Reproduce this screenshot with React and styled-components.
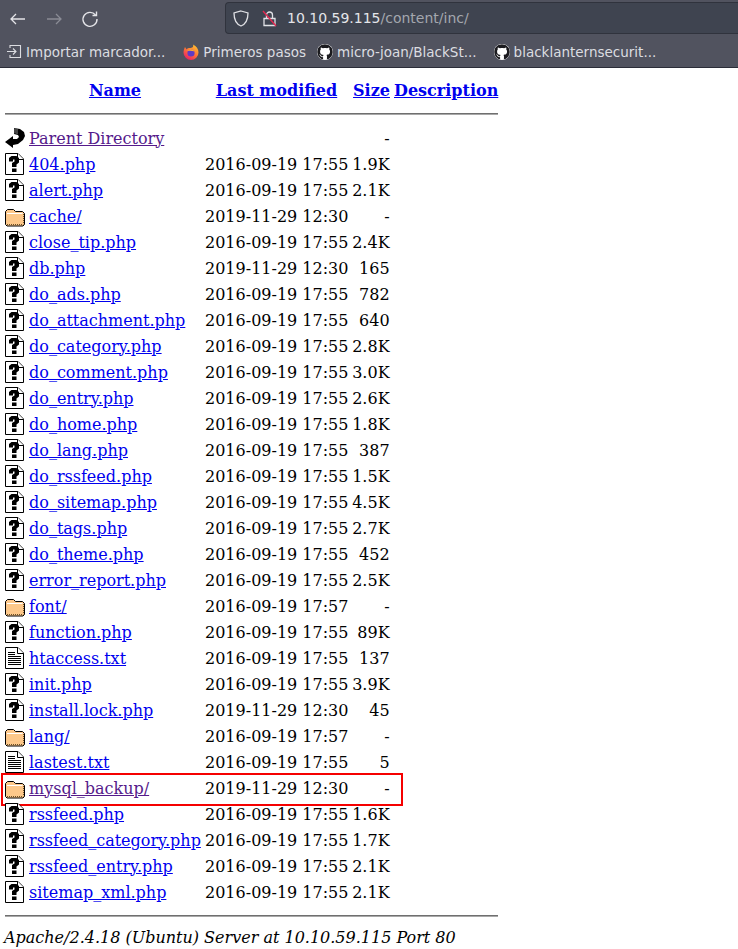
import React from "react"
import styled, { createGlobalStyle } from "styled-components"
import { FaGithub } from "react-icons/fa"

const Global = createGlobalStyle`
    html, body {
        margin: 0;
        padding: 0;
        background: #fff;
    }
    body {
        width: 738px;
        height: 949px;
        overflow: hidden;
        font-family: "DejaVu Serif", serif;
        font-size: 16px;
        color: #000;
    }
`

const Chrome = styled.header`
    height: 68px;
    box-sizing: border-box;
    background: #51535f;
    border-bottom: 1px solid #2b2d38;
    font-family: "DejaVu Sans", sans-serif;
`

const Toolbar = styled.div`
    height: 37px;
    display: flex;
    align-items: center;
`

const NavButton = styled.span`
    width: 18px;
    height: 18px;
    margin-left: ${(p) => p.$gap}px;
    display: flex;
    color: ${(p) => (p.$off ? "#8a8c95" : "#e4e4e8")};
`

const UrlBar = styled.div`
    flex: 1;
    height: 32px;
    margin: 0 0 1px 126px;
    box-sizing: border-box;
    display: flex;
    align-items: center;
    background: #3f4450;
    border: 1px solid #30333d;
    border-right: 0;
    border-radius: 4px 0 0 4px;
    padding-left: 7px;
`

const UrlIcon = styled.span`
    width: 16px;
    height: 17px;
    display: flex;
    margin-right: ${(p) => p.$gap}px;
`

const UrlHost = styled.span`
    font-size: 14px;
    color: #e4e5e9;
`

const UrlPath = styled.span`
    font-size: 14px;
    color: #a4a7ae;
`

const Bookmarks = styled.div`
    height: 30px;
    display: flex;
    align-items: center;
    padding-bottom: 1px;
    box-sizing: border-box;
    font-size: 13.5px;
    color: #dcdde1;
`

const Bookmark = styled.span`
    display: flex;
    align-items: center;
    gap: 4px;
    margin-left: ${(p) => p.$gap}px;
    white-space: nowrap;
`

const GitIcon = styled(FaGithub)`
    width: 16px;
    height: 16px;
    color: #1b1b1f;
    background: #fff;
    border-radius: 50%;
`

const Listing = styled.main`
    padding: 9px 0 0 5px;
`

const HeadRow = styled.div`
    display: grid;
    grid-template-columns: 200px 147px 42px 104px;
    width: 493px;
    height: 26px;
    align-items: center;
    font-weight: bold;
    font-size: 16px;
`

const HeadCell = styled.span`
    text-align: center;
    white-space: nowrap;
    padding-left: ${(p) => p.$left || 0}px;
    padding-right: ${(p) => p.$right || 0}px;
`

const HeadLink = styled.a`
    color: #0000ee;
    text-decoration: underline;
`

const Rule = styled.hr`
    width: 493px;
    height: 2px;
    box-sizing: border-box;
    margin: ${(p) => p.$top}px 0 ${(p) => p.$bottom}px;
    border: 0;
    border-top: 1px solid #6f6f6f;
    border-bottom: 1px solid #a8a8a8;
`

const Row = styled.div`
    position: relative;
    display: grid;
    grid-template-columns: 24px 176px 147px 37.6px;
    width: 493px;
    height: 26px;
    align-items: center;
    white-space: nowrap;
`

const IconCell = styled.span`
    display: flex;
    width: 20px;
    height: 22px;
`

const FileLink = styled.a`
    color: ${(p) => (p.$visited ? "#551a8b" : "#0000ee")};
    text-decoration: underline;
`

const Modified = styled.span``

const Size = styled.span`
    text-align: right;
`

const Highlight = styled.div`
    position: absolute;
    left: -4px;
    top: -2px;
    width: 402px;
    height: 33px;
    box-sizing: border-box;
    border: 2px solid #f50000;
`

const Footer = styled.address`
    font-style: italic;
    font-size: 16px;
    line-height: 19px;
    padding-top: 1px;
    margin-left: -1px;
`

const UnknownIcon = () => (
    <svg width="20" height="22" viewBox="0 0 20 22">
        <path d="M.5.5H13L18.5 6V21.5H.5Z" fill="#fff" stroke="#000" />
        <path d="M12.5.5V6.5H18.5" fill="#fff" stroke="#000" />
        <path d="M4 8.5V5L6.5 3H11.5L14 5V9.5L11.5 11.5V14H7V10L9.5 8.5V6.5H8V8.5Z" fill="#000" />
        <rect x="7" y="15.5" width="4.5" height="3.5" fill="#000" />
    </svg>
)

const TextIcon = () => (
    <svg width="20" height="22" viewBox="0 0 20 22">
        <path d="M.5.5H13L18.5 6V21.5H.5Z" fill="#fff" stroke="#000" />
        <path d="M12.5.5V6.5H18.5" fill="#fff" stroke="#000" />
        <path d="M3 5.5H10M3 7.5H10M3 9.5H16M3 11.5H16M3 13.5H16M3 15.5H16M3 17.5H16" stroke="#000" />
    </svg>
)

const FolderIcon = () => (
    <svg width="20" height="22" viewBox="0 0 20 22">
        <path d="M.5 6.5L2.5 4.5H8.5L10.5 6.5H17.5L19.5 8.5V19.5L18 21H2L.5 19.5Z" fill="#fdc88a" stroke="#000" />
        <path d="M2 8.5H17.5" stroke="#fff" />
        <path d="M2 19.5H18M18.5 9V19.5" stroke="#6d5128" strokeDasharray="1 1" />
    </svg>
)

const BackIcon = () => (
    <svg width="20" height="22" viewBox="0 0 20 22">
        <path d="M9 1L15 2L19 5L20 9L18 13L13 17L8 18V21L0 15L8 9V12H12L14 10L13 8L9 7Z" fill="#000" />
        <path d="M10 1.5V6.5M12 2V7" stroke="#888" />
    </svg>
)

const FirefoxIcon = () => (
    <svg width="16" height="16" viewBox="0 0 16 16">
        <defs>
            <linearGradient id="fx" x1="0.8" y1="0" x2="0.2" y2="1">
                <stop offset="0" stopColor="#ffc62e" />
                <stop offset="0.5" stopColor="#ff7139" />
                <stop offset="1" stopColor="#e3176a" />
            </linearGradient>
        </defs>
        <path d="M2 3C1 5 .5 7 .5 8.5A7.5 7.5 0 0 0 15.5 8.5C15.5 5 13.5 2 10 .5C11 3 9 4 7 4C5 4 4 4.5 3.5 5.5Z" fill="url(#fx)" />
        <circle cx="8" cy="9" r="3.6" fill="#5f3bc4" />
        <path d="M4.5 7C6 4.5 10 4.5 11.5 7.5C9.5 6.5 6.5 6.5 4.5 7Z" fill="#ffb030" />
    </svg>
)

const BackArrow = () => (
    <svg width="18" height="18" viewBox="0 0 18 18" fill="none" stroke="currentColor" strokeWidth="1.3">
        <path d="M2 9H16M7 4L2 9L7 14" />
    </svg>
)

const ForwardArrow = () => (
    <svg width="18" height="18" viewBox="0 0 18 18" fill="none" stroke="currentColor" strokeWidth="1.3">
        <path d="M2 9H16M11 4L16 9L11 14" />
    </svg>
)

const ReloadArrow = () => (
    <svg width="18" height="18" viewBox="0 0 18 18" fill="none" stroke="currentColor" strokeWidth="1.4">
        <path d="M14.5 5A7 7 0 1 0 16 9" />
        <path d="M15.5 1.5V5.5H11.5" />
    </svg>
)

const ShieldIcon = () => (
    <svg width="16" height="17" viewBox="0 0 16 17" fill="none" stroke="#e0e1e5" strokeWidth="1.3">
        <path d="M8 1L15 3C15 9 13 14 8 16C3 14 1 9 1 3Z" />
    </svg>
)

const BrokenLockIcon = () => (
    <svg width="16" height="17" viewBox="0 0 16 17" fill="none">
        <path d="M2 8.5H13V15.5H2Z" stroke="#e0e1e5" strokeWidth="1.3" />
        <path d="M4.5 8V5A3 3 0 0 1 10.5 5V8" stroke="#e0e1e5" strokeWidth="1.3" />
        <path d="M1 1L14 16" stroke="#e22850" strokeWidth="1.4" />
    </svg>
)

const ImportIcon = () => (
    <svg width="15" height="15" viewBox="0 0 15 15" fill="none" stroke="#dcdde1" strokeWidth="1.1">
        <path d="M0 7.5H9M6 4.5L9 7.5L6 10.5" />
        <path d="M3 4V1.5H13.5V13.5H3V11" />
    </svg>
)

const icons = {
    back: BackIcon,
    unknown: UnknownIcon,
    folder: FolderIcon,
    text: TextIcon,
}

const D1 = "2016-09-19 17:55"
const D2 = "2016-09-19 17:57"
const D3 = "2019-11-29 12:30"

const files = [
    { name: "Parent Directory", icon: "back", date: "", size: "-", visited: true },
    { name: "404.php", icon: "unknown", date: D1, size: "1.9K" },
    { name: "alert.php", icon: "unknown", date: D1, size: "2.1K" },
    { name: "cache/", icon: "folder", date: D3, size: "-" },
    { name: "close_tip.php", icon: "unknown", date: D1, size: "2.4K" },
    { name: "db.php", icon: "unknown", date: D3, size: "165" },
    { name: "do_ads.php", icon: "unknown", date: D1, size: "782" },
    { name: "do_attachment.php", icon: "unknown", date: D1, size: "640" },
    { name: "do_category.php", icon: "unknown", date: D1, size: "2.8K" },
    { name: "do_comment.php", icon: "unknown", date: D1, size: "3.0K" },
    { name: "do_entry.php", icon: "unknown", date: D1, size: "2.6K" },
    { name: "do_home.php", icon: "unknown", date: D1, size: "1.8K" },
    { name: "do_lang.php", icon: "unknown", date: D1, size: "387" },
    { name: "do_rssfeed.php", icon: "unknown", date: D1, size: "1.5K" },
    { name: "do_sitemap.php", icon: "unknown", date: D1, size: "4.5K" },
    { name: "do_tags.php", icon: "unknown", date: D1, size: "2.7K" },
    { name: "do_theme.php", icon: "unknown", date: D1, size: "452" },
    { name: "error_report.php", icon: "unknown", date: D1, size: "2.5K" },
    { name: "font/", icon: "folder", date: D2, size: "-" },
    { name: "function.php", icon: "unknown", date: D1, size: "89K" },
    { name: "htaccess.txt", icon: "text", date: D1, size: "137" },
    { name: "init.php", icon: "unknown", date: D1, size: "3.9K" },
    { name: "install.lock.php", icon: "unknown", date: D3, size: "45" },
    { name: "lang/", icon: "folder", date: D2, size: "-" },
    { name: "lastest.txt", icon: "text", date: D1, size: "5" },
    { name: "mysql_backup/", icon: "folder", date: D3, size: "-", visited: true, marked: true },
    { name: "rssfeed.php", icon: "unknown", date: D1, size: "1.6K" },
    { name: "rssfeed_category.php", icon: "unknown", date: D1, size: "1.7K" },
    { name: "rssfeed_entry.php", icon: "unknown", date: D1, size: "2.1K" },
    { name: "sitemap_xml.php", icon: "unknown", date: D1, size: "2.1K" },
]

export default function App() {
    return (
        <>
            <Global />
            <Chrome>
                <Toolbar>
                    <NavButton $gap={9}><BackArrow /></NavButton>
                    <NavButton $gap={18} $off><ForwardArrow /></NavButton>
                    <NavButton $gap={18}><ReloadArrow /></NavButton>
                    <UrlBar>
                        <UrlIcon $gap={13}><ShieldIcon /></UrlIcon>
                        <UrlIcon $gap={9}><BrokenLockIcon /></UrlIcon>
                        <UrlHost>10.10.59.115</UrlHost>
                        <UrlPath>/content/inc/</UrlPath>
                    </UrlBar>
                </Toolbar>
                <Bookmarks>
                    <Bookmark $gap={7}><ImportIcon />Importar marcador...</Bookmark>
                    <Bookmark $gap={18}><FirefoxIcon />Primeros pasos</Bookmark>
                    <Bookmark $gap={11}><GitIcon />micro-joan/BlackSt...</Bookmark>
                    <Bookmark $gap={17}><GitIcon />blacklanternsecurit...</Bookmark>
                </Bookmarks>
            </Chrome>
            <Listing>
                <HeadRow>
                    <HeadCell $left={20}><HeadLink href="#">Name</HeadLink></HeadCell>
                    <HeadCell $right={4}><HeadLink href="#">Last modified</HeadLink></HeadCell>
                    <HeadCell $right={3}><HeadLink href="#">Size</HeadLink></HeadCell>
                    <HeadCell><HeadLink href="#">Description</HeadLink></HeadCell>
                </HeadRow>
                <Rule $top={10} $bottom={10} />
                {files.map((file) => {
                    const Icon = icons[file.icon]
                    return (
                        <Row key={file.name}>
                            <IconCell><Icon /></IconCell>
                            <FileLink href="#" $visited={file.visited}>{file.name}</FileLink>
                            <Modified>{file.date}</Modified>
                            <Size>{file.size}</Size>
                            {file.marked && <Highlight />}
                        </Row>
                    )
                })}
                <Rule $top={10} $bottom={10} />
                <Footer>Apache/2.4.18 (Ubuntu) Server at 10.10.59.115 Port 80</Footer>
            </Listing>
        </>
    )
}
